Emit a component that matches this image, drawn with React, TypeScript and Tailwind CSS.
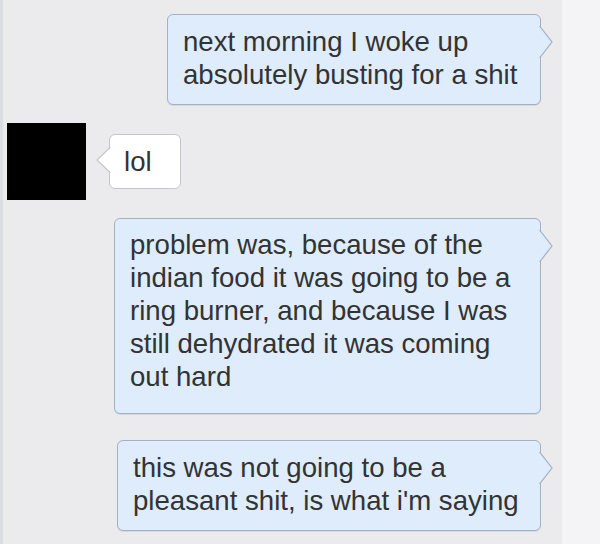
import type { ReactNode } from "react";

const FONT = { fontFamily: '"Liberation Sans", Arial, sans-serif' };

function RightTail() {
  return (
    <svg
      className="absolute top-[11px] left-[calc(100%-1px)]"
      width="14"
      height="32"
      viewBox="0 0 14 32"
    >
      <path d="M0.5 0 L13 16 L0.5 32" fill="#deecfb" stroke="#a3b1c2" strokeWidth="1.2" />
      <rect x="0" y="1" width="1" height="30" fill="#deecfb" />
    </svg>
  );
}

function LeftTail() {
  return (
    <svg
      className="absolute top-[12px] right-[calc(100%-1px)]"
      width="15"
      height="26"
      viewBox="0 0 15 26"
    >
      <path d="M14.5 0 L1 13 L14.5 26" fill="#ffffff" stroke="#c6c6c6" strokeWidth="1.2" />
      <rect x="14" y="1" width="1" height="24" fill="#ffffff" />
    </svg>
  );
}

function Mine({ lines, className }: { lines: string[]; className: string }) {
  return (
    <div
      className={`relative self-end rounded-[6px] border border-[#a3b1c2] bg-[#deecfb] text-[27.6px] leading-[33px] text-[#333] whitespace-nowrap shadow-[0_1px_0_rgba(0,0,0,0.08)] ${className}`}
      style={FONT}
    >
      {lines.map((l, i) => (
        <div key={i}>{l}</div>
      ))}
      <RightTail />
    </div>
  );
}

function Row({ children }: { children: ReactNode }) {
  return <div className="flex items-start">{children}</div>;
}

export default function App() {
  return (
    <div className="flex h-[544px] w-[600px] overflow-hidden bg-[#f4f4f6]">
      <div className="flex w-[562px] flex-col border-l-[3px] border-[#dcdde0] bg-[#ebebed] pr-[21px]">
        <Mine
          className="mt-[14px] h-[91px] w-[374px] pl-[15px] pt-[10px]"
          lines={["next morning I woke up", "absolutely busting for a shit"]}
        />

        <Row>
          <div className="ml-[4px] mt-[18px] h-[77px] w-[79px] bg-black" />
          <div
            className="relative ml-[23px] mt-[29px] h-[55px] w-[72px] rounded-[6px] border border-[#c6c6c6] bg-white pl-[14px] pt-[10px] text-[27.6px] leading-[33px] text-[#333]"
            style={FONT}
          >
            lol
            <LeftTail />
          </div>
        </Row>

        <Mine
          className="mt-[18px] h-[196px] w-[427px] pl-[15px] pt-[9px]"
          lines={[
            "problem was, because of the",
            "indian food it was going to be a",
            "ring burner, and because I was",
            "still dehydrated it was coming",
            "out hard",
          ]}
        />

        <Mine
          className="mt-[26px] h-[91px] w-[424px] pl-[15px] pt-[10px]"
          lines={["this was not going to be a", "pleasant shit, is what i'm saying"]}
        />
      </div>
    </div>
  );
}
